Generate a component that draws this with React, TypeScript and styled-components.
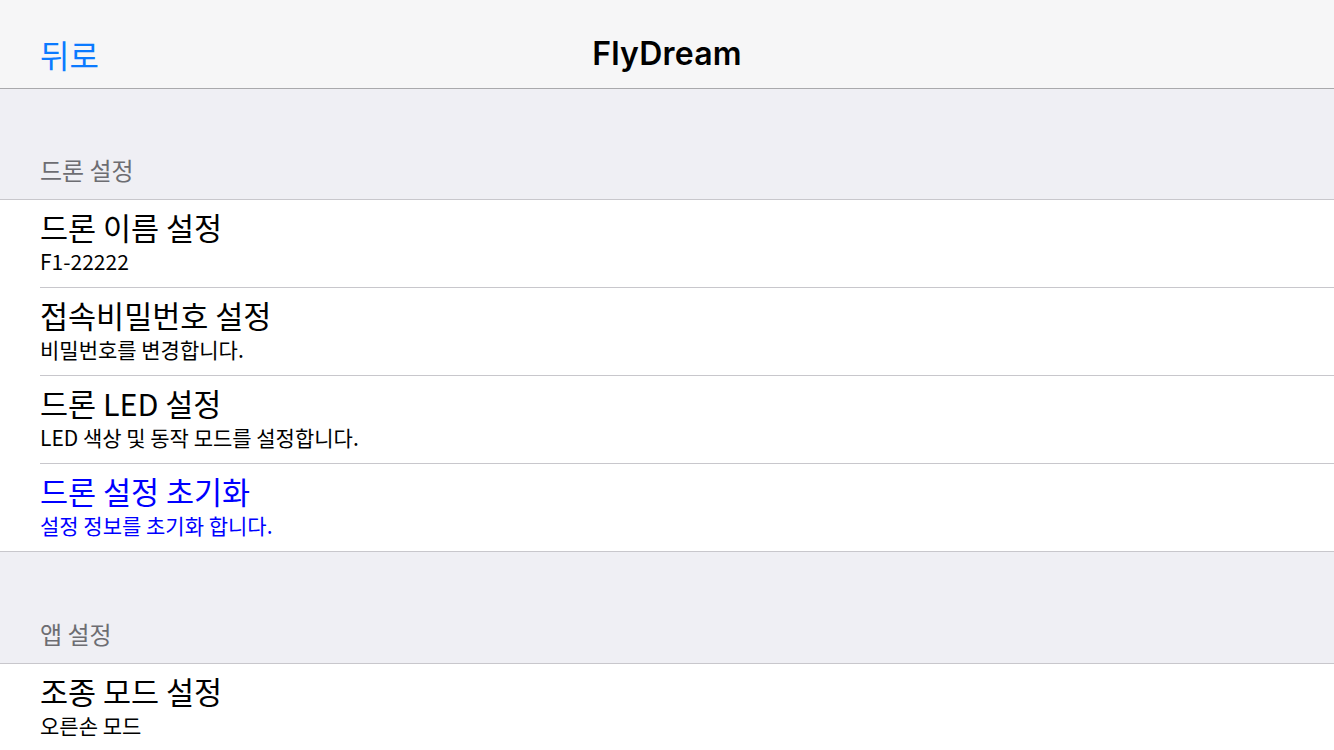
import React from "react";
import styled, { createGlobalStyle } from "styled-components";

const GlobalStyle = createGlobalStyle`
  html, body {
    margin: 0;
    padding: 0;
    background: #efeff4;
    font-family: "Noto Sans CJK KR", "Noto Sans", sans-serif;
  }
`;

const Page = styled.div`
  width: 1334px;
  height: 750px;
  overflow: hidden;
  background: #efeff4;
`;

const NavBar = styled.div`
  height: 89px;
  box-sizing: border-box;
  background: #f6f6f7;
  border-bottom: 1px solid #a9a9ac;
  display: grid;
  grid-template-columns: 1fr auto 1fr;
  align-items: center;
  padding: 20px 40px 0;
`;

const BackButton = styled.div`
  color: #0a7aff;
  font-size: 32px;
  line-height: 36px;
  margin-top: -1px;
`;

const NavTitle = styled.div`
  font-family: "Inter", "Noto Sans", sans-serif;
  font-weight: 600;
  font-size: 32px;
  color: #000;
  line-height: 36px;
  letter-spacing: 0.2px;
`;

const SectionHeader = styled.div<{ $height: number }>`
  height: ${(p) => p.$height}px;
  display: flex;
  align-items: flex-end;
  padding: 0 40px 15px;
  box-sizing: border-box;
  color: #6d6d72;
  font-size: 24px;
  line-height: 28px;
  border-bottom: 1px solid #c8c7cc;
`;

const Group = styled.div`
  background: #fff;
  border-bottom: 1px solid #c8c7cc;
`;

const Row = styled.div<{ $last?: boolean }>`
  margin-left: 40px;
  padding-top: 10px;
  box-sizing: border-box;
  display: flex;
  flex-direction: column;
  border-bottom: ${(p) => (p.$last ? "none" : "1px solid #c8c7cc")};
  height: ${(p) => (p.$last ? "87px" : "88px")};
`;

const Title = styled.div<{ $accent?: boolean }>`
  font-size: 30.5px;
  line-height: 34px;
  color: ${(p) => (p.$accent ? "#0000ff" : "#000")};
`;

const Subtitle = styled.div<{ $accent?: boolean }>`
  margin-top: 5px;
  font-size: 21px;
  line-height: 24px;
  color: ${(p) => (p.$accent ? "#0000ff" : "#000")};
`;

interface Item {
  title: string;
  subtitle: string;
  accent?: boolean;
}

const droneItems: Item[] = [
  { title: "드론 이름 설정", subtitle: "F1-22222" },
  { title: "접속비밀번호 설정", subtitle: "비밀번호를 변경합니다." },
  { title: "드론 LED 설정", subtitle: "LED 색상 및 동작 모드를 설정합니다." },
  { title: "드론 설정 초기화", subtitle: "설정 정보를 초기화 합니다.", accent: true },
];

const appItems: Item[] = [{ title: "조종 모드 설정", subtitle: "오른손 모드" }];

const SettingsGroup = ({ items }: { items: Item[] }) => (
  <Group>
    {items.map((item, i) => (
      <Row key={item.title} $last={i === items.length - 1}>
        <Title $accent={item.accent}>{item.title}</Title>
        <Subtitle $accent={item.accent}>{item.subtitle}</Subtitle>
      </Row>
    ))}
  </Group>
);

export default function App() {
  return (
    <Page>
      <GlobalStyle />
      <NavBar>
        <BackButton>뒤로</BackButton>
        <NavTitle>FlyDream</NavTitle>
        <div />
      </NavBar>
      <SectionHeader $height={111}>드론 설정</SectionHeader>
      <SettingsGroup items={droneItems} />
      <SectionHeader $height={112}>앱 설정</SectionHeader>
      <SettingsGroup items={appItems} />
    </Page>
  );
}
